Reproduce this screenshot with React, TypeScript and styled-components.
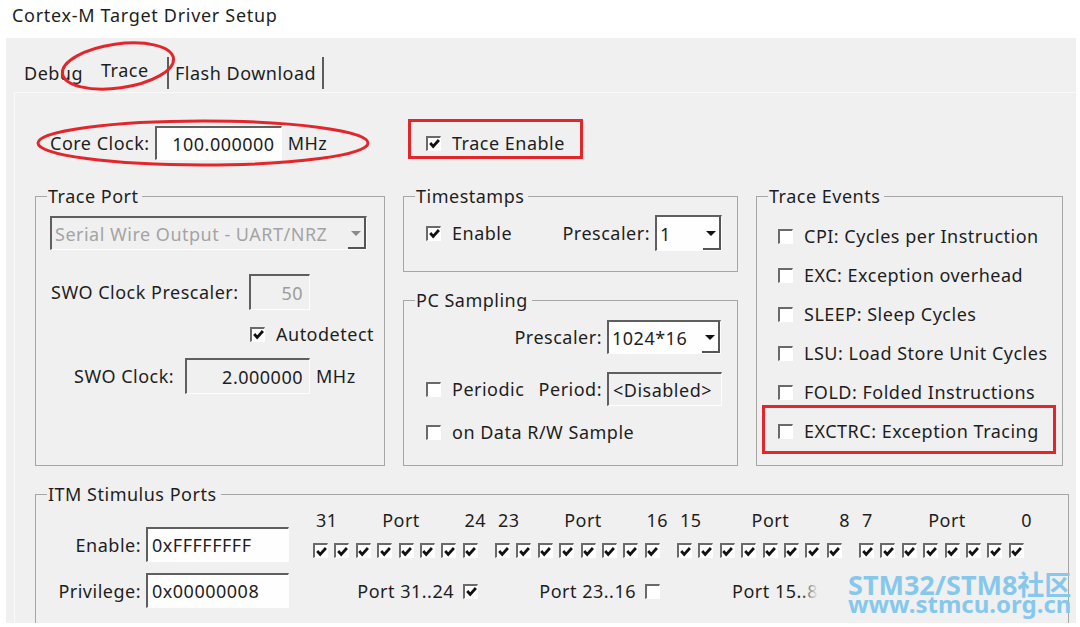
import React from 'react'
import styled, { createGlobalStyle } from 'styled-components'

const GlobalStyle = createGlobalStyle`
  html, body {
    margin: 0;
    padding: 0;
    background: #ffffff;
  }

  body {
    font-family: 'Noto Sans', 'Open Sans', sans-serif;
    font-size: 18px;
    letter-spacing: 0.5px;
    color: #1e1e1e;
  }
`

const Screen = styled.div`
  position: relative;
  width: 1080px;
  height: 627px;
  overflow: hidden;
  background: #ffffff;
`

const TitleBar = styled.div`
  box-sizing: border-box;
  height: 38px;
  padding: 0 0 8px 12px;
  display: flex;
  align-items: center;
  letter-spacing: 0.7px;
`

const Dialog = styled.div`
  margin-left: 6px;
  width: 1070px;
  height: 585px;
  background: #f0f0f0;
  overflow: hidden;
`

const TabStrip = styled.div`
  display: flex;
  align-items: flex-end;
  height: 51px;
  padding-left: 12px;
`

const Tab = styled.div<{ $width: number; $inset: number; $active?: boolean; $edge?: boolean }>`
  box-sizing: border-box;
  width: ${(p) => p.$width}px;
  height: 32px;
  display: flex;
  align-items: center;
  padding-left: ${(p) => p.$inset}px;
  padding-bottom: ${(p) => (p.$active ? 6 : 0)}px;
  border-right: ${(p) => (p.$edge ? '2px solid #5c5c5c' : 'none')};
`

const TabPage = styled.div`
  margin: 3px 0 0 8px;
  border-top: 1px solid #fafafa;
  border-left: 1px solid #fafafa;
  padding: 33px 0 0 20px;
`

const Columns = styled.div<{ $mt?: number }>`
  display: grid;
  grid-template-columns: 350px 335px 307px;
  column-gap: 18px;
  margin-top: ${(p) => p.$mt ?? 0}px;
`

const Stack = styled.div`
  display: flex;
  flex-direction: column;
  gap: 18px;
`

const Row = styled.div<{ $indent?: number; $mt?: number; $h: number; $right?: number; $end?: boolean }>`
  display: flex;
  align-items: center;
  justify-content: ${(p) => (p.$end ? 'flex-end' : 'flex-start')};
  height: ${(p) => p.$h}px;
  margin-top: ${(p) => p.$mt ?? 0}px;
  padding-left: ${(p) => p.$indent ?? 0}px;
  padding-right: ${(p) => p.$right ?? 0}px;
  white-space: nowrap;
`

const Label = styled.span<{ $w?: number; $auto?: boolean }>`
  display: inline-block;
  margin-right: 5px;
  ${(p) => (p.$w ? `width: ${p.$w}px;` : '')}
  ${(p) => (p.$auto ? 'margin-left: auto;' : '')}
  white-space: nowrap;
`

const Unit = styled.span`
  margin-left: 6px;
`

const Field = styled.div<{ $w: number; $h: number; $flat?: boolean; $muted?: boolean; $alignEnd?: boolean }>`
  box-sizing: border-box;
  flex: none;
  width: ${(p) => p.$w}px;
  height: ${(p) => p.$h}px;
  display: flex;
  align-items: center;
  justify-content: ${(p) => (p.$alignEnd ? 'flex-end' : 'flex-start')};
  padding: 0 6px 0 4px;
  border-top: 2px solid #5f5f5f;
  border-left: 2px solid #5f5f5f;
  border-right: 1px solid #fdfdfd;
  border-bottom: 1px solid #fdfdfd;
  background: ${(p) => (p.$flat ? '#f0f0f0' : '#fefefe')};
  color: ${(p) => (p.$muted ? '#9c9c9c' : 'inherit')};
  white-space: nowrap;
`

const ComboBox = styled.div<{ $w: number; $h: number; $disabled?: boolean }>`
  box-sizing: border-box;
  flex: none;
  width: ${(p) => p.$w}px;
  height: ${(p) => p.$h}px;
  display: flex;
  border-top: 2px solid #5f5f5f;
  border-left: 2px solid #5f5f5f;
  border-right: 1px solid #fdfdfd;
  border-bottom: 1px solid #fdfdfd;
  background: ${(p) => (p.$disabled ? '#f0f0f0' : '#fefefe')};
  color: ${(p) => (p.$disabled ? '#a4a4a4' : 'inherit')};
`

const ComboValue = styled.span`
  flex: 1;
  display: flex;
  align-items: center;
  padding-left: 3px;
  overflow: hidden;
  white-space: nowrap;
`

const ComboButton = styled.span<{ $disabled?: boolean }>`
  box-sizing: border-box;
  flex: none;
  width: 18px;
  display: flex;
  align-items: center;
  justify-content: center;
  border-right: 2px solid #555555;
  border-bottom: 2px solid #555555;

  &::after {
    content: '';
    border-left: 5px solid transparent;
    border-right: 5px solid transparent;
    border-top: 5px solid ${(p) => (p.$disabled ? '#8a8a8a' : '#111111')};
    margin-top: 2px;
  }
`

const Box = styled.span<{ $hidden?: boolean }>`
  box-sizing: border-box;
  flex: none;
  width: 15px;
  height: 15px;
  display: inline-flex;
  align-items: center;
  justify-content: center;
  border-top: 2px solid #6a6a6a;
  border-left: 2px solid #6a6a6a;
  border-right: 1px solid #ffffff;
  border-bottom: 1px solid #ffffff;
  background: #ffffff;
  visibility: ${(p) => (p.$hidden ? 'hidden' : 'visible')};
`

const Option = styled.span`
  display: inline-flex;
  align-items: center;
  gap: 11px;
  white-space: nowrap;
`

const Group = styled.fieldset<{ $height: number; $width?: number; $mt?: number }>`
  box-sizing: border-box;
  height: ${(p) => p.$height}px;
  ${(p) => (p.$width ? `width: ${p.$width}px;` : '')}
  margin: ${(p) => p.$mt ?? 0}px 0 0 0;
  padding: 0;
  min-width: 0;
  border: 1px solid #a6a6a6;
`

const Caption = styled.legend`
  margin-left: 11px;
  padding: 0 4px 0 1px;
  line-height: 20px;
`

const GroupBody = styled.div<{ $pl?: number; $pt?: number; $gap?: number }>`
  display: flex;
  flex-direction: column;
  padding-left: ${(p) => p.$pl ?? 0}px;
  padding-top: ${(p) => p.$pt ?? 0}px;
  gap: ${(p) => p.$gap ?? 0}px;
`

const ItmBody = styled.div`
  display: flex;
  align-items: flex-start;
`

const MaskGrid = styled.div`
  display: grid;
  grid-template-columns: 105px 143px;
  grid-auto-rows: 35px;
  column-gap: 5px;
  row-gap: 11px;
  margin-top: 23px;
  align-items: center;
`

const MaskLabel = styled.span`
  text-align: right;
`

const Ports = styled.div`
  display: flex;
  gap: 17px;
  margin: 6px 0 0 24px;
`

const PortGroup = styled.div`
  display: flex;
  flex-direction: column;
  width: 165px;
`

const PortHead = styled.div`
  box-sizing: border-box;
  display: flex;
  justify-content: space-between;
  width: 173px;
  height: 20px;
  line-height: 20px;
  padding-left: 3px;
`

const PortChecks = styled.div`
  display: flex;
  gap: 6.4px;
  margin-top: 13px;
`

const PortFoot = styled.div`
  display: flex;
  justify-content: flex-end;
  align-items: center;
  gap: 9px;
  height: 20px;
  margin-top: 23px;
  white-space: nowrap;
`

/* site stamp in the lower right, laid on a patch of dialog grey */
const Watermark = styled.div`
  position: absolute;
  left: 800px;
  top: 566px;
  box-sizing: border-box;
  width: 262px;
  height: 54px;
  padding: 7px 0 0 48px;
  background: linear-gradient(to right, rgba(240, 240, 240, 0), #f0f0f0 18px);
  color: #86c8ec;
  font-family: 'Noto Sans', 'Noto Sans CJK SC', sans-serif;
  font-weight: 700;
  letter-spacing: 0;
  white-space: nowrap;
`

const WatermarkLine = styled.div<{ $size: number; $lh: number; $mt?: number }>`
  font-size: ${(p) => p.$size}px;
  line-height: ${(p) => p.$lh}px;
  margin-top: ${(p) => p.$mt ?? 0}px;
`

const Marks = styled.svg`
  position: absolute;
  left: 0;
  top: 0;
  width: 1080px;
  height: 627px;
  pointer-events: none;
`

const Check = ({ on, hidden }: { on?: boolean; hidden?: boolean }) => (
  <Box $hidden={hidden}>
    {on && (
      <svg width="11" height="11" viewBox="0 0 11 11" style={{ overflow: 'visible' }}>
        <path d="M1.2 5 L4.2 8.4 L9.9 2" fill="none" stroke="#111" strokeWidth="2.8" />
      </svg>
    )}
  </Box>
)

const CheckItem = ({ on, children }: { on?: boolean; children: React.ReactNode }) => (
  <Option>
    <Check on={on} />
    <span>{children}</span>
  </Option>
)

const Combo = ({ w, h, value, disabled }: { w: number; h: number; value: string; disabled?: boolean }) => (
  <ComboBox $w={w} $h={h} $disabled={disabled}>
    <ComboValue>{value}</ComboValue>
    <ComboButton $disabled={disabled} />
  </ComboBox>
)

const traceEvents = [
  'CPI: Cycles per Instruction',
  'EXC: Exception overhead',
  'SLEEP: Sleep Cycles',
  'LSU: Load Store Unit Cycles',
  'FOLD: Folded Instructions',
  'EXCTRC: Exception Tracing',
]

// privilege foot row: the last ports sit under the site stamp
const portGroups = [
  { hi: 31, lo: 24, on: true, foot: true, box: true },
  { hi: 23, lo: 16, on: false, foot: true, box: true },
  { hi: 15, lo: 8, on: false, foot: true, box: false },
  { hi: 7, lo: 0, on: false, foot: false, box: false },
]

export default function App() {
  return (
    <Screen>
      <GlobalStyle />
      <TitleBar>Cortex-M Target Driver Setup</TitleBar>

      <Dialog>
        <TabStrip>
          <Tab $width={74} $inset={6}>Debug</Tab>
          <Tab $width={77} $inset={9} $active $edge>Trace</Tab>
          <Tab $width={155} $inset={6} $edge>Flash Download</Tab>
        </TabStrip>

        <TabPage>
          <Columns>
            <Row $h={34} $indent={15}>
              <Label>Core Clock:</Label>
              <Field $w={127} $h={34} $alignEnd>100.000000</Field>
              <Unit>MHz</Unit>
            </Row>
            <Row $h={34} $indent={23}>
              <CheckItem on>Trace Enable</CheckItem>
            </Row>
          </Columns>

          <Columns $mt={26}>
            <Group $height={280}>
              <Caption>Trace Port</Caption>
              <GroupBody $pl={14}>
                <Row $h={34} $mt={10}>
                  <Combo w={317} h={34} value="Serial Wire Output - UART/NRZ" disabled />
                </Row>
                <Row $h={36} $mt={24} $indent={1}>
                  <Label $w={193}>SWO Clock Prescaler:</Label>
                  <Field $w={61} $h={36} $flat $muted $alignEnd>50</Field>
                </Row>
                <Row $h={20} $mt={14} $indent={200}>
                  <CheckItem on>Autodetect</CheckItem>
                </Row>
                <Row $h={36} $mt={14} $indent={24}>
                  <Label $w={106}>SWO Clock:</Label>
                  <Field $w={125} $h={36} $flat $alignEnd>2.000000</Field>
                  <Unit>MHz</Unit>
                </Row>
              </GroupBody>
            </Group>

            <Stack>
              <Group $height={86}>
                <Caption>Timestamps</Caption>
                <Row $h={36} $mt={9} $indent={22} $right={15}>
                  <CheckItem on>Enable</CheckItem>
                  <Label $auto>Prescaler:</Label>
                  <Combo w={67} h={36} value="1" />
                </Row>
              </Group>

              <Group $height={176}>
                <Caption>PC Sampling</Caption>
                <Row $h={34} $mt={10} $right={16} $end>
                  <Label>Prescaler:</Label>
                  <Combo w={114} h={34} value="1024*16" />
                </Row>
                <Row $h={34} $mt={18} $indent={22} $right={15}>
                  <CheckItem>Periodic</CheckItem>
                  <Label $auto>Period:</Label>
                  <Field $w={115} $h={34} $flat>&lt;Disabled&gt;</Field>
                </Row>
                <Row $h={20} $mt={16} $indent={22}>
                  <CheckItem>on Data R/W Sample</CheckItem>
                </Row>
              </Group>
            </Stack>

            <Group $height={280}>
              <Caption>Trace Events</Caption>
              <GroupBody $pl={21} $pt={20} $gap={19}>
                {traceEvents.map((ev) => (
                  <Row key={ev} $h={20}>
                    <CheckItem>{ev}</CheckItem>
                  </Row>
                ))}
              </GroupBody>
            </Group>
          </Columns>

          <Group $height={200} $width={1034} $mt={18}>
            <Caption>ITM Stimulus Ports</Caption>
            <ItmBody>
              <MaskGrid>
                <MaskLabel>Enable:</MaskLabel>
                <Field $w={143} $h={35}>0xFFFFFFFF</Field>
                <MaskLabel>Privilege:</MaskLabel>
                <Field $w={143} $h={35}>0x00000008</Field>
              </MaskGrid>

              <Ports>
                {portGroups.map((g) => (
                  <PortGroup key={g.hi}>
                    <PortHead>
                      <span>{g.hi}</span>
                      <span>Port</span>
                      <span>{g.lo}</span>
                    </PortHead>
                    <PortChecks>
                      {Array.from({ length: 8 }, (_, i) => (
                        <Check key={i} on />
                      ))}
                    </PortChecks>
                    <PortFoot>
                      {g.foot && (
                        <span>
                          Port {g.hi}..{g.lo}
                        </span>
                      )}
                      <Check on={g.on} hidden={!g.box} />
                    </PortFoot>
                  </PortGroup>
                ))}
              </Ports>
            </ItmBody>
          </Group>
        </TabPage>
      </Dialog>

      <Watermark>
        <WatermarkLine $size={27} $lh={24}>STM32/STM8社区</WatermarkLine>
        <WatermarkLine $size={24} $lh={20} $mt={-3}>www.stmcu.org.cn</WatermarkLine>
      </Watermark>

      <Marks viewBox="0 0 1080 627">
        <g fill="none" stroke="#e3262c" strokeWidth="3">
          <ellipse cx="118" cy="66" rx="56" ry="22" transform="rotate(-8 118 66)" />
          <ellipse cx="203" cy="143" rx="165" ry="22" />
          <rect x="409.5" y="120.5" width="172" height="37" />
          <rect x="763.5" y="406.5" width="291" height="46" />
        </g>
      </Marks>
    </Screen>
  )
}
